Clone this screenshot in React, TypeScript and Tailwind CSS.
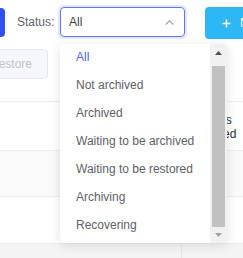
import React from 'react';

const options = [
  'All',
  'Not archived',
  'Archived',
  'Waiting to be archived',
  'Waiting to be restored',
  'Archiving',
  'Recovering',
];

const StatusDropdown = ({ selected }: { selected: string }) => {
  return (
    <div className="absolute left-[60px] top-[44px] w-[167px] h-[199px] flex bg-white rounded-[4px] shadow-[0_2px_12px_rgba(0,0,0,0.12)] overflow-hidden">
      <div className="w-[150px] overflow-hidden">
        <ul className="-mt-[1px]">
          {options.map((o) => (
            <li
              key={o}
              className={`h-[28px] flex items-center pl-[16px] whitespace-nowrap ${
                o === selected ? 'text-[#4f62f0]' : 'text-[#5e6169]'
              }`}
            >
              {o}
            </li>
          ))}
        </ul>
      </div>
      {/* scrollbar */}
      <div className="w-[17px] bg-[#f1f1f1] flex flex-col items-center">
        <div className="h-[18px] w-full flex items-center justify-center">
          <svg width="7" height="4" viewBox="0 0 7 4">
            <path d="M0 4 L3.5 0 L7 4 Z" fill="#505050" />
          </svg>
        </div>
        <div className="mt-[4px] w-[13px] h-[161px] bg-[#c1c1c1]" />
        <div className="h-[16px] w-full flex items-center justify-center">
          <svg width="7" height="4" viewBox="0 0 7 4">
            <path d="M0 0 L7 0 L3.5 4 Z" fill="#a3a3a3" />
          </svg>
        </div>
      </div>
    </div>
  );
};

export default function App() {
  return (
    <div className="relative w-[243px] h-[258px] overflow-hidden bg-white font-['Liberation_Sans',Arial,sans-serif] text-[12px]">
      {/* toolbar */}
      <div className="flex items-start pt-[7px] h-[39px]">
        <div className="-ml-[40px] mt-[1px] w-[45px] h-[29px] rounded-[4px] bg-[#2f51f3] shrink-0" />
        <span className="ml-[12px] w-[43px] h-[30px] leading-[30px] text-[#606266] shrink-0">Status:</span>
        <div className="w-[125px] h-[30px] shrink-0 flex items-center justify-between pl-[8px] pr-[10px] border border-[#6575f2] rounded-[4px] shadow-[0_0_0_2px_#e3e7ff] text-[#404246]">
          <span>All</span>
          <svg width="9" height="5" viewBox="0 0 9 5" className="mt-[1px]">
            <path d="M0.8 4.5 L4.5 0.8 L8.2 4.5" fill="none" stroke="#9da1a8" strokeWidth="1.2" />
          </svg>
        </div>
        <div className="ml-[20px] w-[80px] h-[32px] shrink-0 flex items-center pl-[17px] rounded-[4px] bg-[#2db7f5] text-white">
          <svg width="9" height="9" viewBox="0 0 9 9">
            <path d="M4.5 0.5 V8.5 M0.5 4.5 H8.5" stroke="#fff" strokeWidth="1.6" />
          </svg>
          <span className="ml-[9px]">New</span>
        </div>
      </div>

      {/* batch actions */}
      <div className="flex mt-[10px]">
        <div className="-ml-[44px] w-[92px] h-[30px] flex items-center justify-end pr-[15px] bg-[#f5f7fa] border border-[#e4e7ed] rounded-[4px] text-[#c0c4cc] whitespace-nowrap">
          restore
        </div>
      </div>

      {/* table */}
      <div className="mt-[22px]">
        <div className="h-[50px] border-t border-b border-[#ebeef5] flex items-center pt-[2px]">
          <div className="w-[191px] shrink-0" />
          <div className="leading-[14px] text-[#303133] whitespace-nowrap">
            Objects
            <br />
            archived
          </div>
        </div>
        <div className="h-[46px] border-b border-[#ebeef5] bg-[#fafafa]" />
        <div className="h-[47px] border-b border-[#ebeef5]" />
        <div className="h-[20px] bg-[#f4f4f5] flex">
          <div className="w-[182px] border-r border-[#e6e6e6]" />
        </div>
      </div>

      <StatusDropdown selected="All" />
    </div>
  );
}
